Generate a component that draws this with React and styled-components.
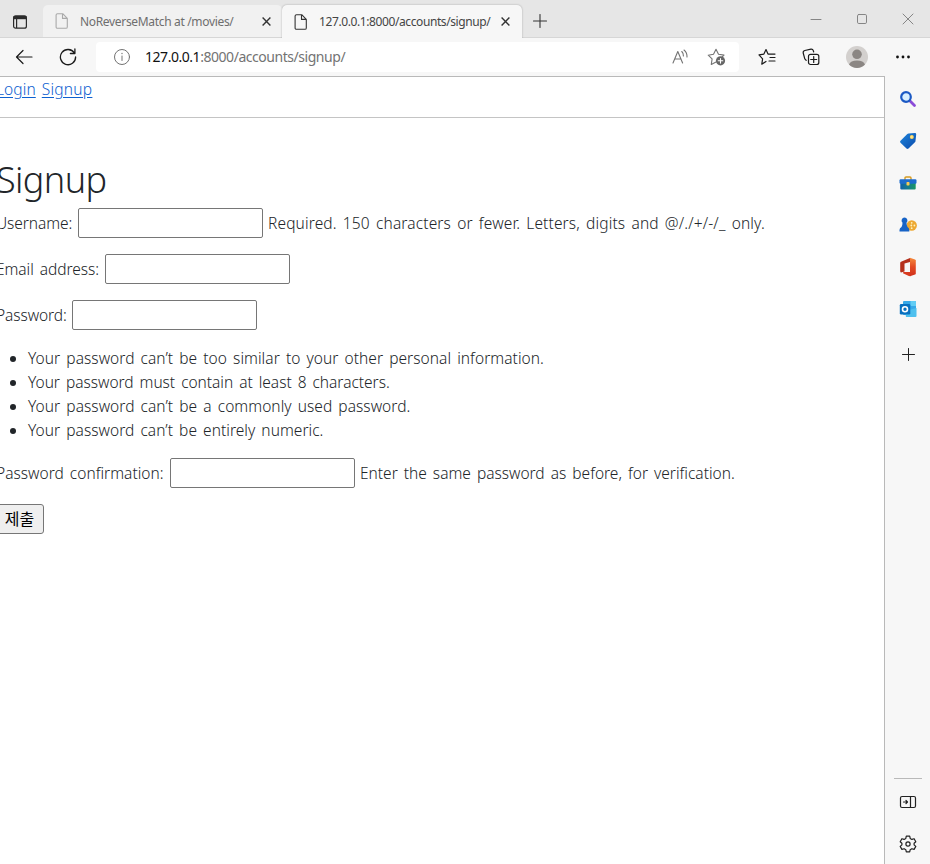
import React from 'react';
import styled, { createGlobalStyle } from 'styled-components';

const Global = createGlobalStyle`
  * { box-sizing: border-box; }
  body { margin: 0; background: #f7f7f7; overflow: hidden; font-family: "Noto Sans", "Noto Sans CJK KR", sans-serif; }
  svg { display: block; flex: none; }
`;

const Window = styled.div`
  width: 930px; height: 864px; display: flex; flex-direction: column; overflow: hidden; background: #f7f7f7;
`;
const TabStrip = styled.div`
  height: 38px; display: flex; align-items: flex-end; background: #e6e6e6; border-bottom: 1px solid #d6d6d6; flex: none;
`;
const TabActions = styled.div`
  width: 43px; height: 31px; padding-left: 12px; display: flex; align-items: center;
`;
const Tab = styled.div`
  width: ${p => (p.$active ? 240 : 239)}px;
  height: ${p => (p.$active ? 33 : 32)}px;
  margin-bottom: ${p => (p.$active ? -1 : 0)}px;
  padding: 0 0 0 12px;
  display: flex; align-items: center;
  border-radius: 5px 5px 0 0;
  background: ${p => (p.$active ? '#f7f7f7' : '#f1f1f1')};
  box-shadow: ${p => (p.$active ? '0 0 2px rgba(0,0,0,.3)' : 'none')};
  clip-path: inset(-3px -3px 0 -3px);
  color: ${p => (p.$active ? '#454545' : '#6e6e6e')};
`;
const TabTitle = styled.span`
  width: 182px; margin-left: 11px; font-size: 12px; line-height: 16px; white-space: nowrap;
  letter-spacing: ${p => p.$ls || 0}px; padding-top: 1px;
`;
const Caption = styled.div`
  flex: 1; height: 37px; display: flex; align-items: center; justify-content: flex-end; gap: 34px; padding-right: 16px; color: #858585;
`;
const NewTab = styled.div`height: 32px; padding-left: 11px; display: flex; align-items: center;`;

const Toolbar = styled.div`
  height: 38px; flex: none; display: flex; align-items: center; padding-left: 15px; color: #1b1b1b;
`;
const ToolSlot = styled.div`
  width: ${p => p.$w}px; display: flex; align-items: center; flex: none;
`;
const AddressBar = styled.div`
  width: 643px; height: 30px; flex: none; padding-left: 17px; display: flex; align-items: center; background: #fff;
  border-radius: 4px; color: #737373;
`;
const Url = styled.div`
  flex: 1; padding-left: 14px; font-size: 14px; letter-spacing: -0.46px; color: #737373; line-height: 20px;
`;
const Host = styled.span`color: #111;`;

const Body = styled.div`flex: 1; min-height: 0; display: flex;`;
const Page = styled.main`
  width: 885px; overflow: hidden; background: #fff; border-top: 1px solid #b9b9b9; border-right: 1px solid #b9b9b9;
  color: #212529; font-size: 15.5px; font-weight: 350; line-height: 24px;
`;
const Nav = styled.nav`
  height: 41px; margin-left: -4px; display: flex; gap: 6px; border-bottom: 1px solid #c4c4c4;
`;
const Link = styled.a`
  color: #0d60d0; text-decoration: underline; text-underline-offset: 2px; letter-spacing: ${p => p.$ls || 0}px;
`;
const Form = styled.form`margin: 0 0 0 -4px; padding-top: 38px;`;
const Heading = styled.h1`
  height: 48px; margin: 0 0 4px; font-size: 36px; font-weight: 350; line-height: 48px; letter-spacing: -0.6px;
`;
const Field = styled.div`
  height: 30px; margin-bottom: 16px; display: flex; align-items: center; white-space: nowrap;
`;
const Label = styled.label`
  width: ${p => p.$w}px; flex: none; letter-spacing: ${p => p.$ls || 0}px; word-spacing: 2px; padding-bottom: 1px;
`;
const Input = styled.input`
  width: 185px; height: 30px; flex: none; padding: 0; border: 1px solid #767676; border-radius: 2px; background: #fff;
`;
const Help = styled.span`
  margin-left: 5px; word-spacing: 2px; padding-bottom: 1px; letter-spacing: ${p => p.$ls || 0}px;
`;
const Rules = styled.ul`margin: 0 0 16px; padding: 0 0 0 14px; list-style: none;`;
const Rule = styled.li`
  height: 24px; display: flex; align-items: center; gap: 12px; word-spacing: 2px; white-space: nowrap;
  letter-spacing: ${p => p.$ls || 0}px; line-height: 23px;
  &::before { content: ""; width: 6px; height: 6px; border-radius: 50%; background: #212529; margin-top: 1px; }
`;
const Submit = styled.button`
  width: 48px; height: 30px; padding: 0 1px 2px 0; border: 1px solid #767676; border-radius: 3px; background: #efefef; color: #000;
  font: 16px "Noto Sans CJK KR", sans-serif; white-space: nowrap;
`;

const Sidebar = styled.aside`
  flex: 1; display: flex; flex-direction: column; align-items: center; padding: 14px 0 11px 1px; color: #222;
`;
const SideItem = styled.div`
  height: 18px; margin-bottom: ${p => p.$gap ?? 24}px; display: flex; align-items: center;
`;
const Spacer = styled.div`flex: 1;`;
const Divider = styled.div`width: 28px; height: 1px; background: #b9b9b9; margin-bottom: 14px;`;

const Line = ({ w = 18, h = 18, sw = 1.2, children }) => (
  <svg width={w} height={h} viewBox={`0 0 ${w} ${h}`} fill="none" stroke="currentColor" strokeWidth={sw} strokeLinecap="round" strokeLinejoin="round">{children}</svg>
);
const DocIcon = ({ color }) => (
  <svg width="14" height="16" viewBox="0 0 14 16" fill="none" stroke={color} strokeWidth="1.1" strokeLinejoin="round">
    <path d="M2.5.7h5.200l4.600 4.600v8.600q0 1.400-1.400 1.400H2.500Q1.100 15.300 1.100 13.900V2.100Q1.100.7 2.500.7zM7.500.8v4.600h4.700" />
  </svg>
);
const CloseIcon = () => (
  <svg width="9" height="9" viewBox="0 0 9 9" stroke="#333" strokeWidth="1.4"><path d="M.6.6l7.800 7.800M8.400.6L.6 8.400" /></svg>
);

const rules = [
  { text: 'Your password can’t be too similar to your other personal information.', ls: 0.05 },
  { text: 'Your password must contain at least 8 characters.', ls: -0.02 },
  { text: 'Your password can’t be a commonly used password.', ls: 0.05 },
  { text: 'Your password can’t be entirely numeric.', ls: 0.04 },
];

export default function App() {
  return (
    <Window>
      <Global />
      <TabStrip>
        <TabActions>
          <svg width="16" height="16" viewBox="0 0 16 16" fill="none" stroke="#2b2b2b" strokeWidth="1.2">
            <rect x="1.600" y="1.800" width="12.800" height="12.400" rx="2" /><path d="M1.600 3.600h12.800" strokeWidth="3.200" /><path d="M4.600 4v10" />
          </svg>
        </TabActions>
        <Tab>
          <DocIcon color="#a9a9a9" />
          <TabTitle $ls={-0.33}>NoReverseMatch at /movies/</TabTitle>
          <CloseIcon />
        </Tab>
        <Tab $active>
          <DocIcon color="#333" />
          <TabTitle $ls={-0.4}>127.0.0.1:8000/accounts/signup/</TabTitle>
          <CloseIcon />
        </Tab>
        <NewTab><Line w={14} h={14} sw={1.1}><path d="M7 .5v13M.5 7h13" stroke="#333" /></Line></NewTab>
        <Caption>
          <Line w={12} h={12} sw={1}><path d="M1 6.500h10" /></Line>
          <Line w={12} h={12} sw={1}><rect x="1.500" y="1.500" width="9" height="9" rx="1.300" /></Line>
          <Line w={12} h={12} sw={1}><path d="M1 1l10 10M11 1L1 11" /></Line>
        </Caption>
      </TabStrip>

      <Toolbar>
        <ToolSlot $w={44}><Line><path d="M17 9H1.500M8 2.500L1.500 9 8 15.500" /></Line></ToolSlot>
        <ToolSlot $w={37}><Line sw={1.3}><path d="M15.400 5A7.600 7.600 0 1 0 16.600 9M15.900 1v4.500h-4.500" /></Line></ToolSlot>
        <AddressBar>
          <Line sw={1}><circle cx="9" cy="9" r="7.500" /><path d="M9 8v4.500" /><path d="M9 5.400v.2" strokeWidth="1.300" /></Line>
          <Url><Host>127.0.0.1</Host>:8000/accounts/signup/</Url>
          <ToolSlot $w={35}>
            <Line w={17} h={17} sw={1.1}><path d="M1 14L5.800 2.500 10.600 14M2.700 10h6.200M9.800 2.500q1.800 1.800 1.600 4.500M12 1q3.200 2.600 3 7" /></Line>
          </ToolSlot>
          <ToolSlot $w={32}>
            <Line w={19} h={18} sw={1.1}>
              <path d="M9 14l-4.700 2.400.8-5.500L1.200 7.200l5.300-.9L9 1.300l2.500 5 5.500.8-2.200 2.200" />
              <circle cx="13.500" cy="12.800" r="4.600" fill="#666" stroke="none" /><path d="M13.500 10.500v4.600M11.200 12.800h4.600" stroke="#fff" />
            </Line>
          </ToolSlot>
        </AddressBar>
        <ToolSlot $w={19} />
        <ToolSlot $w={44}>
          <Line sw={1.2}><path d="M8 13.500l-4.200 2.700.8-5.400L1 6.900l4.900-.8L8 1.500l2 4.600h7M12 9.500h5M11 13h6" /></Line>
        </ToolSlot>
        <ToolSlot $w={44}>
          <Line sw={1.2}><rect x="6.500" y="6.300" width="10.300" height="10.200" rx="2" /><path d="M11.700 8.500v6M8.700 11.500h6M4.200 12.300L2.800 10.800 1.200 5Q.9 3 2.800 2.500L9 1.100q1.800-.2 2.300 1.500l.4 1.400" /></Line>
        </ToolSlot>
        <ToolSlot $w={49}>
          <svg width="22" height="22" viewBox="0 0 22 22"><circle cx="11" cy="11" r="11" fill="#d3d0ce" /><circle cx="11" cy="8.300" r="4.800" fill="#8b8683" /><path d="M3 18.500q1.500-4 8-4t8 4a11 11 0 0 1-16 0z" fill="#8b8683" /></svg>
        </ToolSlot>
        <ToolSlot $w={20}>
          <svg width="16" height="4" viewBox="0 0 16 4" fill="#111"><circle cx="2.500" cy="2" r="1.400" /><circle cx="8" cy="2" r="1.400" /><circle cx="13.500" cy="2" r="1.400" /></svg>
        </ToolSlot>
      </Toolbar>

      <Body>
        <Page>
          <Nav><Link $ls={0.1}>Login</Link><Link $ls={0.25}>Signup</Link></Nav>
          <Form>
            <Heading>Signup</Heading>
            <Field><Label $w={82} $ls={-0.08}>Username:</Label><Input /><Help $ls={0.14}>Required. 150 characters or fewer. Letters, digits and @/./+/-/_ only.</Help></Field>
            <Field><Label $w={109} $ls={-0.04}>Email address:</Label><Input /></Field>
            <Field><Label $w={76} $ls={-0.08}>Password:</Label><Input /></Field>
            <Rules>{rules.map(r => <Rule key={r.text} $ls={r.ls}>{r.text}</Rule>)}</Rules>
            <Field><Label $w={174} $ls={0.02}>Password confirmation:</Label><Input /><Help $ls={0}>Enter the same password as before, for verification.</Help></Field>
            <Submit type="button">제출</Submit>
          </Form>
        </Page>
        <Sidebar>
          <SideItem>
            <svg width="18" height="18" viewBox="0 0 18 18" fill="none"><path d="M10.800 10.800l4.700 4.700" stroke="#8b4bd8" strokeWidth="2.800" strokeLinecap="round" /><circle cx="7" cy="7" r="4.800" stroke="#1b59c4" strokeWidth="2.200" fill="#d8efff" /></svg>
          </SideItem>
          <SideItem>
            <svg width="18" height="18" viewBox="0 0 18 18"><defs><linearGradient id="tag" x1="0" y1="0" x2="1" y2="1"><stop stopColor="#1f86dc" /><stop offset="1" stopColor="#0b4aab" /></linearGradient></defs><path d="M9.500 1.500L16 1q1.200 0 1.200 1.200l-.7 6.800q0 .7-.6 1.300L9.500 16.500q-1 .9-2 0L1.500 10.800q-1-1 0-2L8.300 2q.5-.5 1.200-.5z" fill="url(#tag)" /><circle cx="12.800" cy="5" r="2" fill="#ffd75e" /><circle cx="12.800" cy="5" r=".8" fill="#fff1b5" /></svg>
          </SideItem>
          <SideItem>
            <svg width="18" height="18" viewBox="0 0 18 18"><defs><linearGradient id="kit" x1="0" y1="0" x2="1" y2="0"><stop stopColor="#1260a8" /><stop offset=".5" stopColor="#137d90" /><stop offset="1" stopColor="#1a9862" /></linearGradient></defs><path d="M6 6V4q0-1 1-1h4q1 0 1 1v2" fill="none" stroke="#d59b22" strokeWidth="1.400" /><rect x="1.300" y="8" width="15.400" height="7.500" rx="1" fill="url(#kit)" /><rect x=".5" y="5.300" width="17" height="4.500" rx="1.200" fill="#1c6cce" /><rect x="7.500" y="8" width="3" height="3.500" rx=".7" fill="#f6cb55" /></svg>
          </SideItem>
          <SideItem>
            <svg width="18" height="18" viewBox="0 0 18 18"><circle cx="12.700" cy="9.500" r="5.200" fill="#eda832" /><g fill="#fff0bd"><circle cx="12.700" cy="6.800" r=".9" /><circle cx="12.700" cy="12.200" r=".9" /><circle cx="15.400" cy="9.500" r=".9" /><circle cx="12.300" cy="9.500" r=".9" /></g><path d="M5.500 1.500a3 3 0 0 1 2 5.200q.1 3 1 4.300 1.800 1 1.800 3v1.500H.5V14q0-2 2-3 1-1.300 1-4.300a3 3 0 0 1 2-5.200z" fill="#1763c6" /></svg>
          </SideItem>
          <SideItem>
            <svg width="18" height="20" viewBox="0 0 18 20"><defs><linearGradient id="office" x1="0" y1="0" x2="0" y2="1"><stop stopColor="#f58a3c" /><stop offset=".5" stopColor="#e34a22" /><stop offset="1" stopColor="#d0301c" /></linearGradient></defs><path d="M2 4.700L11 1v4L5.500 6.500v8L2 15.500q-.8-.5-.8-1.500V6q0-.9.8-1.300z" fill="#b5301c" /><path d="M11 .8l5 1.600q.8.300.8 1.200v12.800q0 .9-.8 1.200l-5 1.600z" fill="url(#office)" /><path d="M5 15h6.300v4.200L9.800 19 4 16.300Q3.700 15 5 15z" fill="#d93b20" /></svg>
          </SideItem>
          <SideItem $gap={27}>
            <svg width="18" height="18" viewBox="0 0 18 18"><rect x="4" y="1" width="13" height="14" rx="1" fill="#37a9e8" /><path d="M11.500 1H16q1 0 1 1v4h-5.500z" fill="#62cdf5" /><path d="M6 11l11.500-3v8q0 1-1 1H7z" fill="#4fc0ee" /><rect x=".8" y="4" width="10.500" height="10.500" rx="1.300" fill="#0870bf" /><circle cx="6" cy="9.300" r="2.500" fill="none" stroke="#fff" strokeWidth="1.600" /></svg>
          </SideItem>
          <SideItem><Line w={13} h={13} sw={1}><path d="M6.500.5v12M.5 6.500h12" /></Line></SideItem>
          <Spacer />
          <Divider />
          <SideItem>
            <Line sw={1.2}><rect x="1.500" y="3.500" width="15" height="11" rx="1.500" /><path d="M11.500 3.500v11M4.500 9h4M7 7.500L8.500 9 7 10.500" /></Line>
          </SideItem>
          <SideItem $gap={0}>
            <Line sw={1.2}><path d="M7.300 1.200h3.400l.5 2.200 1.700 1 2.200-.7 1.700 3-1.700 1.500v1.700l1.700 1.500-1.700 3-2.200-.7-1.700 1-.5 2.200H7.300l-.5-2.200-1.700-1-2.200.7-1.700-3 1.700-1.500V8.200L1.200 6.700l1.700-3 2.200.7 1.700-1z" /><circle cx="9" cy="9" r="2.100" /></Line>
          </SideItem>
        </Sidebar>
      </Body>
    </Window>
  );
}
